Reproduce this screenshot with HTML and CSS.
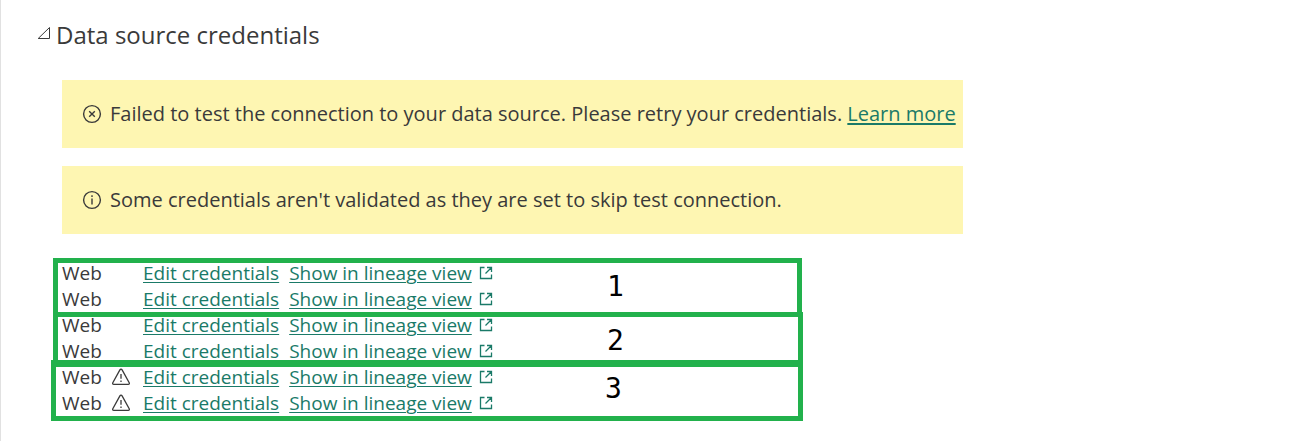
FILE: index.html
```html
<!DOCTYPE html>
<html lang="en">
<head>
    <meta charset="UTF-8">
    <meta name="viewport" content="width=device-width, initial-scale=1">
    <title>Data source credentials</title>
    <link rel="stylesheet" href="styles.css">
</head>
<body>
<svg class="sprite" aria-hidden="true">
    <symbol id="icon-open" viewBox="0 0 14 14">
        <path d="M5.5 1.5H1.5V12.5H12.5V8.5M8 1.5H12.5V6M12.5 1.5L6.5 7.5"/>
    </symbol>
    <symbol id="icon-warning" viewBox="0 0 20 18">
        <path d="M10 1.2Q10.7 1.2 11.1 1.9L18.2 14.8Q18.8 16.4 17.2 16.4H2.8Q1.2 16.4 1.8 14.8L8.9 1.9Q9.3 1.2 10 1.2ZM10 6V10.8M10 12.4V14"/>
    </symbol>
</svg>

<main class="settings">
    <h1 class="section-title">
        <button class="section-toggle" type="button" aria-expanded="true">
            <svg class="toggle-icon" viewBox="0 0 14 14" aria-hidden="true"><path d="M12.5 1.5V12.5H1.2Z"/></svg>
            Data source credentials
        </button>
    </h1>

    <div class="section-body">
        <div class="alert">
            <svg class="alert-icon" viewBox="0 0 20 20" aria-hidden="true">
                <circle cx="10" cy="10" r="8.4"/>
                <path d="M7.2 7.2L12.8 12.8M12.8 7.2L7.2 12.8"/>
            </svg>
            <p>Failed to test the connection to your data source. Please retry your credentials. <a class="learn-more" href="#">Learn more</a></p>
        </div>
        <div class="alert">
            <svg class="alert-icon" viewBox="0 0 20 20" aria-hidden="true">
                <circle cx="10" cy="10" r="8.4"/>
                <path d="M10 5.2V7M10 8.6V14.4"/>
            </svg>
            <p>Some credentials aren't validated as they are set to skip test connection.</p>
        </div>

        <div class="sources">
            <ul class="source-list">
                <li class="source">
                    <span class="source-name">Web</span>
                    <a href="#">Edit credentials</a>
                    <a href="#">Show in lineage view</a>
                    <svg class="open-icon"><use href="#icon-open"/></svg>
                </li>
                <li class="source">
                    <span class="source-name">Web</span>
                    <a href="#">Edit credentials</a>
                    <a href="#">Show in lineage view</a>
                    <svg class="open-icon"><use href="#icon-open"/></svg>
                </li>
                <li class="source">
                    <span class="source-name">Web</span>
                    <a href="#">Edit credentials</a>
                    <a href="#">Show in lineage view</a>
                    <svg class="open-icon"><use href="#icon-open"/></svg>
                </li>
                <li class="source">
                    <span class="source-name">Web</span>
                    <a href="#">Edit credentials</a>
                    <a href="#">Show in lineage view</a>
                    <svg class="open-icon"><use href="#icon-open"/></svg>
                </li>
                <li class="source">
                    <span class="source-name">Web <svg class="warning-icon"><use href="#icon-warning"/></svg></span>
                    <a href="#">Edit credentials</a>
                    <a href="#">Show in lineage view</a>
                    <svg class="open-icon"><use href="#icon-open"/></svg>
                </li>
                <li class="source">
                    <span class="source-name">Web <svg class="warning-icon"><use href="#icon-warning"/></svg></span>
                    <a href="#">Edit credentials</a>
                    <a href="#">Show in lineage view</a>
                    <svg class="open-icon"><use href="#icon-open"/></svg>
                </li>
            </ul>

            <!-- numbered frames over the rows -->
            <div class="frame frame-first">1</div>
            <div class="frame frame-second">2</div>
            <div class="frame frame-third">3</div>
        </div>
    </div>
</main>
</body>
</html>
```

FILE: styles.css
```css
* {
    box-sizing: border-box;
}

body {
    margin: 0;
    background: #fff;
    color: #3a3a3a;
    font-family: "Segoe UI", "Open Sans", "Noto Sans", sans-serif;
    font-size: 19px;
    line-height: 26px;
}

p {
    margin: 0;
}

a {
    color: #1a7a68;
    text-decoration: underline;
    text-decoration-thickness: 1px;
    text-underline-offset: 2px;
}

svg {
    fill: none;
    stroke: currentColor;
    flex-shrink: 0;
}

.sprite {
    position: absolute;
    width: 0;
    height: 0;
}

.settings {
    min-height: 100vh;
    padding: 18px 36px 20px;
    border-left: 1px solid #e1e1e1;
}

.section-title {
    margin: 0 0 28px;
    font-size: 24px;
    font-weight: 400;
    line-height: 34px;
}

.section-toggle {
    display: flex;
    gap: 5px;
    padding: 0;
    border: 0;
    background: none;
    color: inherit;
    font: inherit;
    cursor: pointer;
}

.toggle-icon {
    width: 14px;
    height: 14px;
    margin-top: 8px;
}

.section-body {
    padding-left: 25px;
}

.alert {
    display: flex;
    align-items: center;
    gap: 8px;
    max-width: 901px;
    min-height: 68px;
    margin-bottom: 18px;
    padding: 8px 0 8px 20px;
    background: #fef6b2;
    font-size: 20px;
}

.alert-icon {
    width: 20px;
    height: 20px;
    stroke-width: 1.4;
}

.learn-more {
    text-decoration-thickness: 2px;
}

.sources {
    position: relative;
    margin-top: 26px;
}

.source-list {
    margin: 0;
    padding: 0;
    list-style: none;
}

.source {
    display: flex;
    align-items: center;
    gap: 10px;
}

.source-name {
    display: flex;
    align-items: center;
    gap: 9px;
    width: 71px;
}

.warning-icon {
    width: 20px;
    height: 18px;
    stroke-width: 1.3;
}

.open-icon {
    width: 14px;
    height: 14px;
    margin-left: -3px;
    stroke-width: 1.3;
    color: #1a7a68;
}

.frame {
    position: absolute;
    left: -9px;
    width: 750px;
    padding: 10px 0 0 549px;
    border: 5px solid #22b14c;
    color: #000;
    font: 28px/28px "DejaVu Sans Mono", monospace;
    pointer-events: none;
}

.frame-first {
    top: -2px;
    width: 749px;
    height: 59px;
}

.frame-second {
    top: 52px;
    height: 55px;
}

.frame-third {
    top: 100px;
    left: -11px;
    width: 752px;
    height: 61px;
}
```
